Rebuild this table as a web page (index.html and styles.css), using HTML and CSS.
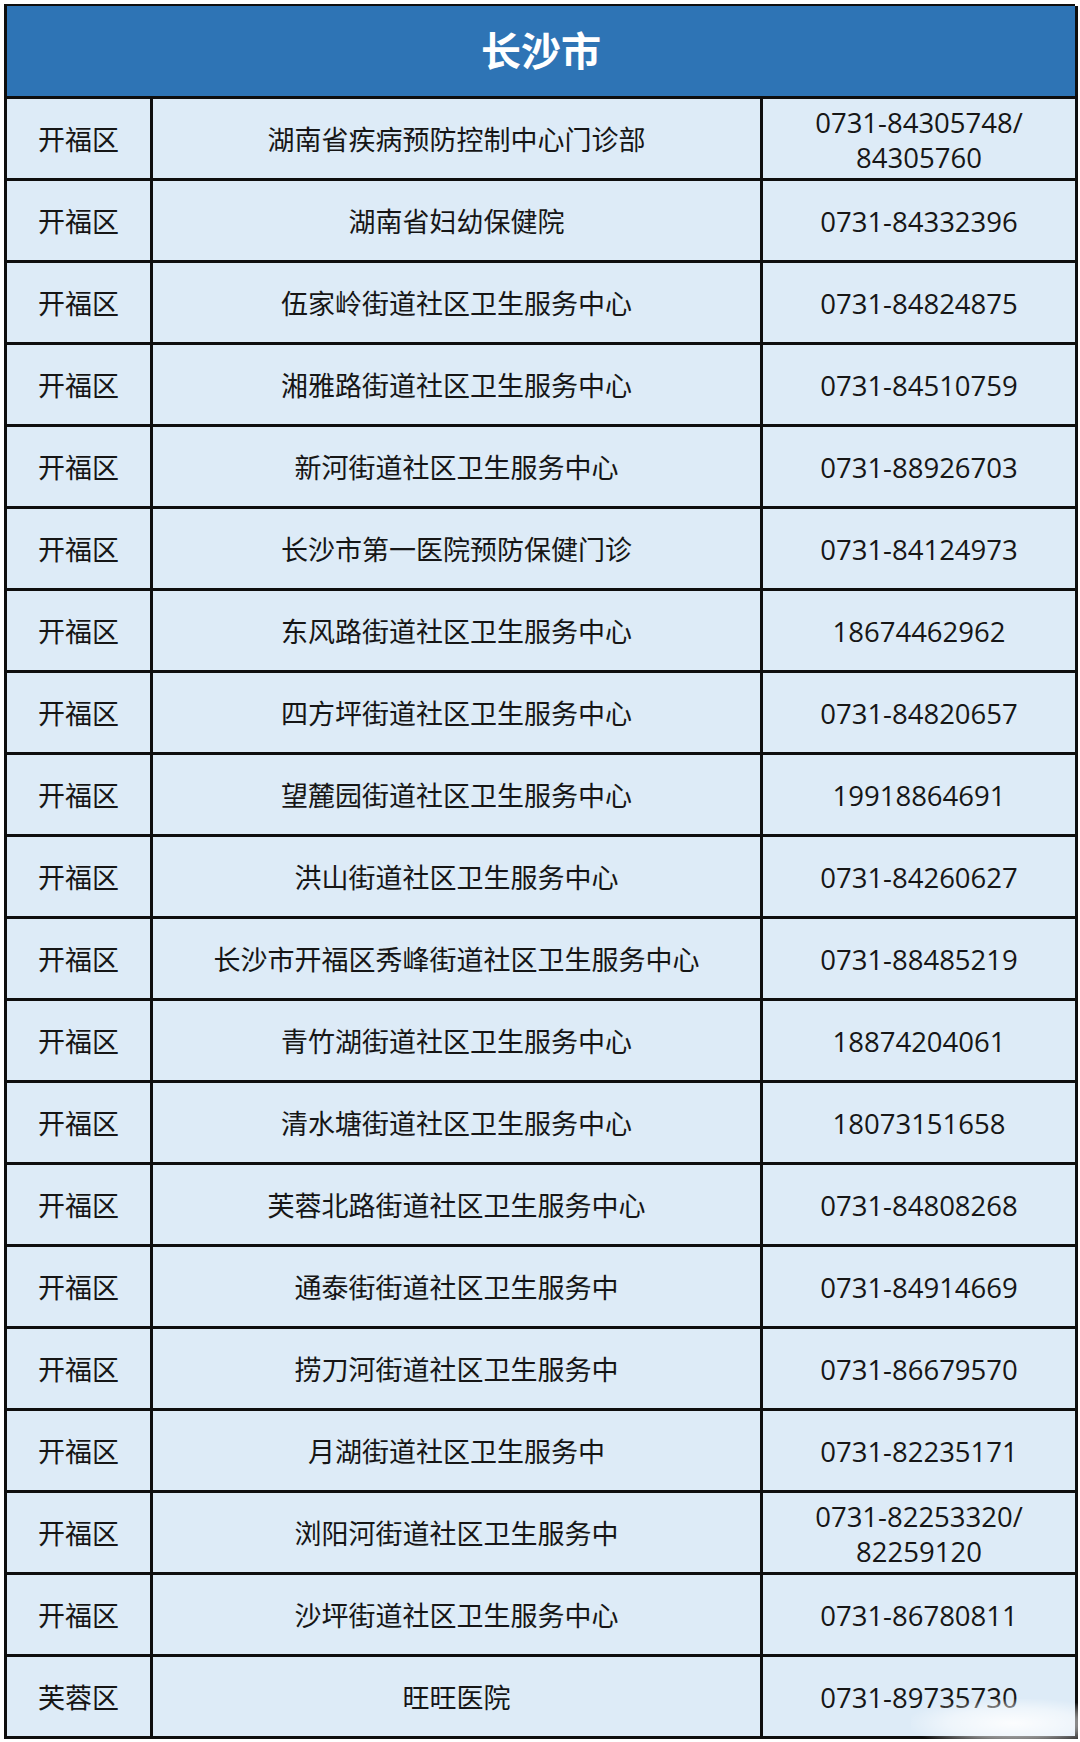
FILE: index.html
```html
<!DOCTYPE html>
<html lang="zh-CN">
<head>
<meta charset="utf-8">
<title>长沙市</title>
<link rel="stylesheet" href="styles.css">
</head>
<body>
<div class="sheet">
  <div class="title">长沙市</div>

  <div class="cell">开福区</div><div class="cell">湖南省疾病预防控制中心门诊部</div><div class="cell num">0731-84305748/<br>84305760</div>
  <div class="cell">开福区</div><div class="cell">湖南省妇幼保健院</div><div class="cell num">0731-84332396</div>
  <div class="cell">开福区</div><div class="cell">伍家岭街道社区卫生服务中心</div><div class="cell num">0731-84824875</div>
  <div class="cell">开福区</div><div class="cell">湘雅路街道社区卫生服务中心</div><div class="cell num">0731-84510759</div>
  <div class="cell">开福区</div><div class="cell">新河街道社区卫生服务中心</div><div class="cell num">0731-88926703</div>
  <div class="cell">开福区</div><div class="cell">长沙市第一医院预防保健门诊</div><div class="cell num">0731-84124973</div>
  <div class="cell">开福区</div><div class="cell">东风路街道社区卫生服务中心</div><div class="cell num">18674462962</div>
  <div class="cell">开福区</div><div class="cell">四方坪街道社区卫生服务中心</div><div class="cell num">0731-84820657</div>
  <div class="cell">开福区</div><div class="cell">望麓园街道社区卫生服务中心</div><div class="cell num">19918864691</div>
  <div class="cell">开福区</div><div class="cell">洪山街道社区卫生服务中心</div><div class="cell num">0731-84260627</div>
  <div class="cell">开福区</div><div class="cell">长沙市开福区秀峰街道社区卫生服务中心</div><div class="cell num">0731-88485219</div>
  <div class="cell">开福区</div><div class="cell">青竹湖街道社区卫生服务中心</div><div class="cell num">18874204061</div>
  <div class="cell">开福区</div><div class="cell">清水塘街道社区卫生服务中心</div><div class="cell num">18073151658</div>
  <div class="cell">开福区</div><div class="cell">芙蓉北路街道社区卫生服务中心</div><div class="cell num">0731-84808268</div>
  <div class="cell">开福区</div><div class="cell">通泰街街道社区卫生服务中</div><div class="cell num">0731-84914669</div>
  <div class="cell">开福区</div><div class="cell">捞刀河街道社区卫生服务中</div><div class="cell num">0731-86679570</div>
  <div class="cell">开福区</div><div class="cell">月湖街道社区卫生服务中</div><div class="cell num">0731-82235171</div>
  <div class="cell">开福区</div><div class="cell">浏阳河街道社区卫生服务中</div><div class="cell num">0731-82253320/<br>82259120</div>
  <div class="cell">开福区</div><div class="cell">沙坪街道社区卫生服务中心</div><div class="cell num">0731-86780811</div>
  <div class="cell">芙蓉区</div><div class="cell">旺旺医院</div><div class="cell num">0731-89735730</div>

  <div class="smudge"></div>
</div>
</body>
</html>
```

FILE: styles.css
```css
* {
  box-sizing: border-box;
}

html, body {
  margin: 0;
  padding: 0;
  background: #ffffff;
}

body {
  font-family: "Open Sans", "Noto Sans CJK SC", sans-serif;
  color: #161616;
}

.sheet {
  position: relative;
  margin: 4px 0 0 4px;
  width: 1071px;
  display: grid;
  grid-template-columns: 146px 610px 315px;
  grid-template-rows: 93px;
  grid-auto-rows: 82px;
  border-top: 2px solid #0e0e0e;
  border-left: 3px solid #0e0e0e;
}

.title {
  grid-column: 1 / 4;
  background: #2e74b5;
  color: #ffffff;
  font-family: "Noto Sans CJK SC", sans-serif;
  font-weight: 700;
  font-size: 40px;
  display: flex;
  align-items: center;
  justify-content: center;
  border-right: 3px solid #0e0e0e;
  border-bottom: 3px solid #0e0e0e;
  padding-bottom: 4px;
}

.cell {
  background: #ddebf7;
  border-right: 3px solid #0e0e0e;
  border-bottom: 3px solid #0e0e0e;
  display: flex;
  align-items: center;
  justify-content: center;
  text-align: center;
  font-size: 27px;
  line-height: 35px;
  padding-top: 2px;
}

.num {
  font-size: 27.5px;
}

.smudge {
  position: absolute;
  right: -6px;
  bottom: -4px;
  width: 170px;
  height: 44px;
  background: radial-gradient(ellipse at 60% 55%, rgba(255,255,255,0.9) 0%, rgba(255,255,255,0.5) 45%, rgba(255,255,255,0) 75%);
  pointer-events: none;
}
```
